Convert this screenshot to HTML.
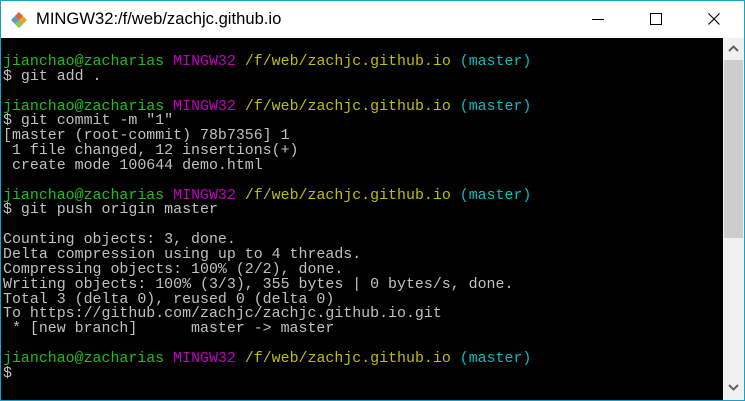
<!DOCTYPE html>
<html><head><meta charset="utf-8"><style>
html,body{margin:0;padding:0;width:745px;height:401px;overflow:hidden;background:#fff}
.win{position:absolute;left:0;top:0;width:743px;height:399px;border:1px solid #18a0c8}
.title{position:absolute;left:0;top:0;width:743px;height:37px;background:#fff}
.ttext{position:absolute;left:35px;top:8px;font-family:"Liberation Sans",sans-serif;font-size:16.6px;color:#000}
.term{position:absolute;left:0;top:37px;width:722px;height:362px;background:#000}
.t{margin:0;position:absolute;left:2px;top:17px;font-family:"Liberation Mono","DejaVu Sans Mono",monospace;font-size:14.93px;line-height:14.85px;color:#c0c0c0;white-space:pre}
.g{color:#1cbf1c}.m{color:#bf00bf}.y{color:#bfbf00}.c{color:#00bfbf}
.sb{position:absolute;left:722px;top:37px;width:21px;height:362px;background:#f0f0f0}
.thumb{position:absolute;left:1px;top:22px;width:19px;height:178px;background:#cdcdcd}
</style></head><body>
<div class="win">
<div class="title">
<svg style="position:absolute;left:9px;top:10px" width="18" height="18" viewBox="0 0 18 18">
<path d="M9 1 L17 9 L9 17 L1 9Z" fill="#f0a030"/>
<path d="M1 9 L5 5 L9 9 L5 13Z" fill="#5b9bd5"/>
<path d="M9 9 L13 13 L9 17 L5 13Z" fill="#8cc84b"/>
<path d="M5 5 L9 1 L13 5 L9 9Z" fill="#e06040"/>
</svg>
<div class="ttext">MINGW32:/f/web/zachjc.github.io</div>
<div style="position:absolute;left:591px;top:18px;width:12px;height:1px;background:#000"></div>
<div style="position:absolute;left:649px;top:12px;width:10px;height:10px;border:1px solid #000"></div>
<svg style="position:absolute;left:707px;top:12px" width="12" height="12"><path d="M0.5 0.5L11.5 11.5M11.5 0.5L0.5 11.5" stroke="#000" stroke-width="1.1"/></svg>
</div>
<div class="term"><div class="t"><span class="g">jianchao@zacharias</span> <span class="m">MINGW32</span> <span class="y">/f/web/zachjc.github.io</span> <span class="c">(master)</span>
$ git add .

<span class="g">jianchao@zacharias</span> <span class="m">MINGW32</span> <span class="y">/f/web/zachjc.github.io</span> <span class="c">(master)</span>
$ git commit -m "1"
[master (root-commit) 78b7356] 1
 1 file changed, 12 insertions(+)
 create mode 100644 demo.html

<span class="g">jianchao@zacharias</span> <span class="m">MINGW32</span> <span class="y">/f/web/zachjc.github.io</span> <span class="c">(master)</span>
$ git push origin master

Counting objects: 3, done.
Delta compression using up to 4 threads.
Compressing objects: 100% (2/2), done.
Writing objects: 100% (3/3), 355 bytes | 0 bytes/s, done.
Total 3 (delta 0), reused 0 (delta 0)
To https://github.com/zachjc/zachjc.github.io.git
 * [new branch]      master -&gt; master

<span class="g">jianchao@zacharias</span> <span class="m">MINGW32</span> <span class="y">/f/web/zachjc.github.io</span> <span class="c">(master)</span>
$</div></div>
<div class="sb"><div class="thumb"></div>
<svg style="position:absolute;left:5px;top:7px" width="11" height="7"><path d="M1 6L5.5 1.5L10 6" stroke="#606060" stroke-width="2" fill="none"/></svg>
<svg style="position:absolute;left:5px;top:346px" width="11" height="7"><path d="M1 1L5.5 5.5L10 1" stroke="#606060" stroke-width="2" fill="none"/></svg>
</div>
</div>
</body></html>
